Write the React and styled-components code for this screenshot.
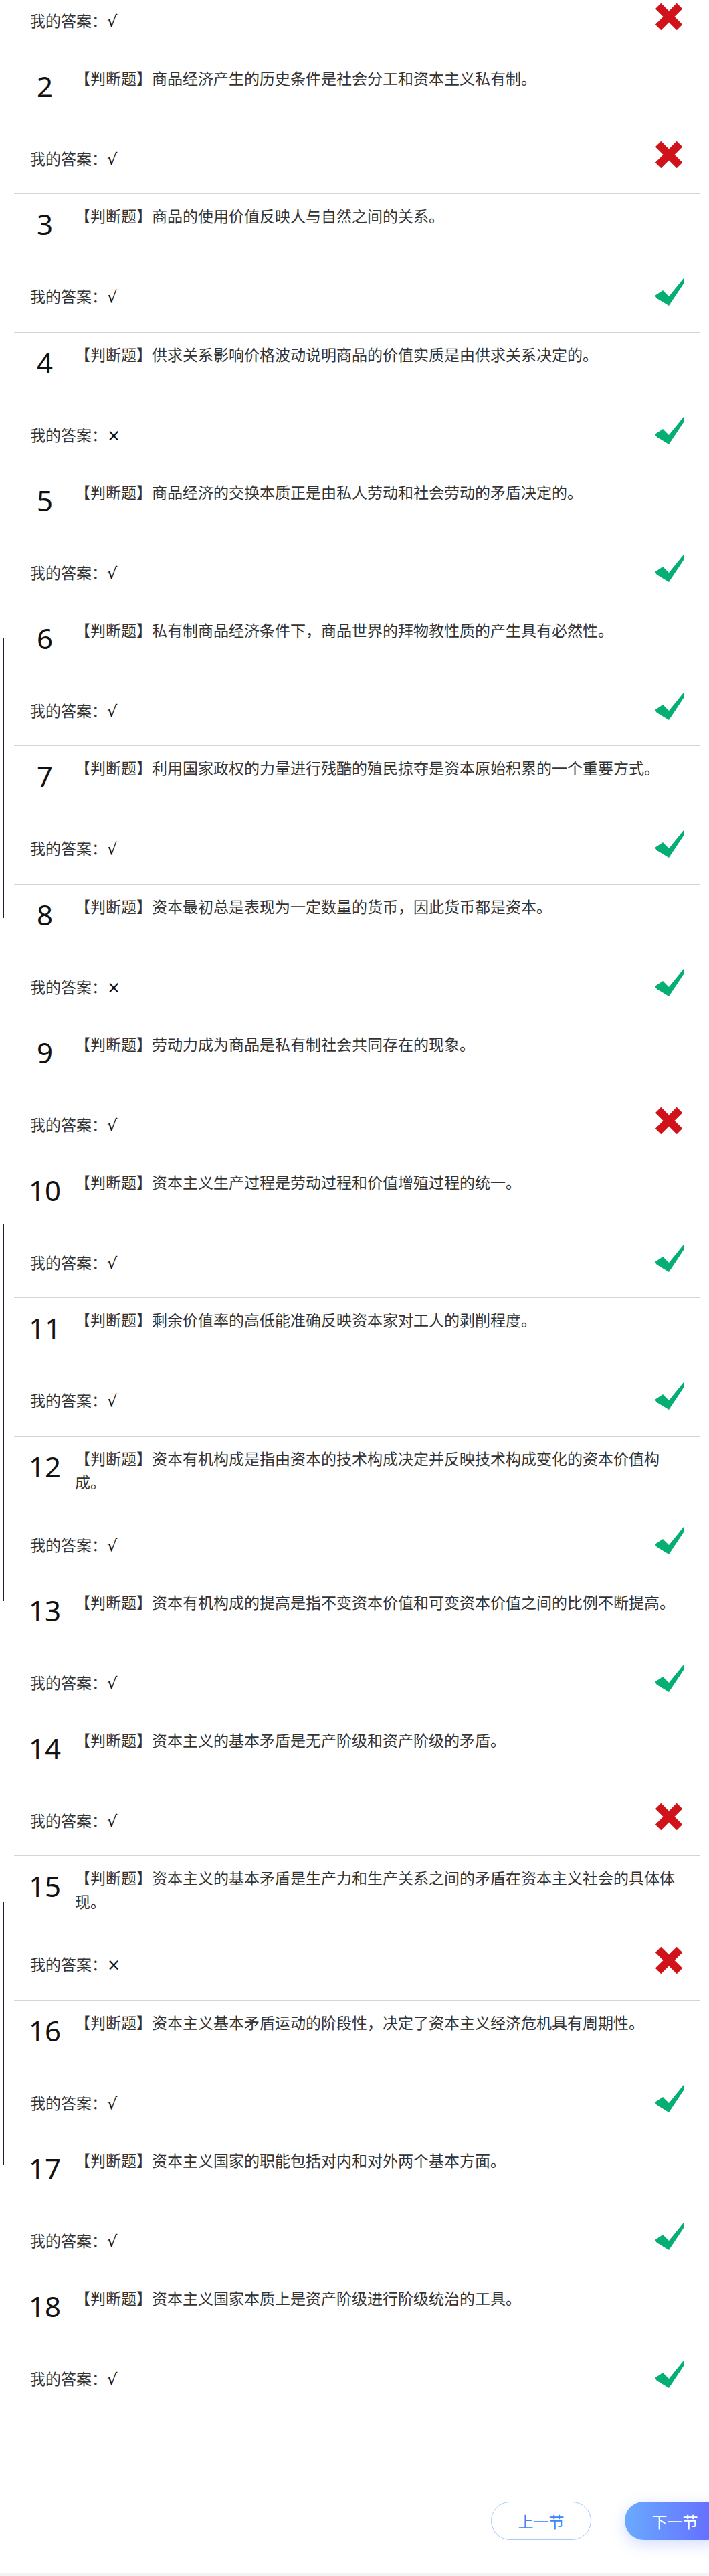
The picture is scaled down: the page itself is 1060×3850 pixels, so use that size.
import React from 'react';
import styled, { createGlobalStyle } from 'styled-components';

const GlobalStyle = createGlobalStyle`
  html, body {
    margin: 0;
    padding: 0;
    background: #f2f3f5;
    overflow-x: hidden;
  }
  * {
    box-sizing: border-box;
  }
`;

const Page = styled.div`
  position: relative;
  width: 1060px;
  height: 3845px;
  overflow: hidden;
  background: #fff;
  padding: 0 13px 0 21px;
  font-family: 'Noto Sans CJK SC', 'Noto Sans', sans-serif;
  color: #333;
`;

// 왼쪽 세로 막대 (스크린샷에 남은 자국)
const SideBar = styled.div`
  position: absolute;
  left: 4px;
  width: 2px;
  background: #1b2033;
`;

const List = styled.div`
  margin-top: -122.25px;
`;

const Item = styled.div`
  padding: 14px 25px 35.25px 24px;
  border-bottom: ${(p) => (p.$last ? 'none' : '1px solid #d4d4d4')};
`;

const QuestionRow = styled.div`
  display: flex;
  align-items: flex-start;
`;

const Num = styled.div`
  flex-shrink: 0;
  width: 50px;
  margin-left: -3px;
  margin-right: 20px;
  text-align: center;
  font-family: 'Noto Sans', sans-serif;
  font-size: 42px;
  line-height: 62px;
  color: #111;
`;

const QText = styled.div`
  flex: 1;
  margin-top: 1px;
  font-size: 23px;
  line-height: 35px;
  color: #333;
`;

const AnswerRow = styled.div`
  display: flex;
  align-items: center;
  justify-content: space-between;
  margin-top: 58px;
`;

const AnswerText = styled.div`
  height: 36px;
  font-size: 23px;
  line-height: 36px;
  color: #333;
`;

const Mark = styled.span`
  font-family: 'DejaVu Sans', 'Liberation Sans', sans-serif;
  font-size: 24px;
  line-height: 0;
  color: #111;
`;

const IconBox = styled.svg`
  width: 44px;
  height: 44px;
  flex-shrink: 0;
  margin-top: -14px;
  margin-bottom: -4px;
`;

const Footer = styled.div`
  display: flex;
  justify-content: flex-end;
  gap: 50px;
  margin-top: 132px;
  margin-right: -37px;
`;

const Button = styled.div`
  width: 150px;
  height: 57px;
  border-radius: 29px;
  display: flex;
  align-items: center;
  justify-content: center;
  font-size: 23px;
  border: 1px solid ${(p) => (p.$primary ? 'transparent' : '#a9c7ff')};
  color: ${(p) => (p.$primary ? '#fff' : '#3b86ff')};
  background: ${(p) =>
    p.$primary ? 'linear-gradient(90deg, #6aaaff 0%, #6366ff 100%)' : '#fff'};
  box-shadow: ${(p) =>
    p.$primary ? '0 6px 22px rgba(90, 130, 255, 0.28)' : 'none'};
`;

const WrongIcon = () => (
  <IconBox viewBox="0 0 44 44">
    <g stroke="#d0121b" strokeWidth="12" strokeLinecap="butt">
      <line x1="6" y1="6" x2="38" y2="38" />
      <line x1="38" y1="6" x2="6" y2="38" />
    </g>
  </IconBox>
);

const RightIcon = () => (
  <IconBox viewBox="0 0 44 44">
    <path d="M1 27 L13 19 L22 28 L44 1 L44 9 L22 42 L4 31 Z" fill="#05ae73" />
  </IconBox>
);

const questions = [
  { text: '商品是用来交换的劳动产品。', ans: '√', ok: false },
  { text: '商品经济产生的历史条件是社会分工和资本主义私有制。', ans: '√', ok: false },
  { text: '商品的使用价值反映人与自然之间的关系。', ans: '√', ok: true },
  { text: '供求关系影响价格波动说明商品的价值实质是由供求关系决定的。', ans: '×', ok: true },
  { text: '商品经济的交换本质正是由私人劳动和社会劳动的矛盾决定的。', ans: '√', ok: true },
  { text: '私有制商品经济条件下，商品世界的拜物教性质的产生具有必然性。', ans: '√', ok: true },
  { text: '利用国家政权的力量进行残酷的殖民掠夺是资本原始积累的一个重要方式。', ans: '√', ok: true },
  { text: '资本最初总是表现为一定数量的货币，因此货币都是资本。', ans: '×', ok: true },
  { text: '劳动力成为商品是私有制社会共同存在的现象。', ans: '√', ok: false },
  { text: '资本主义生产过程是劳动过程和价值增殖过程的统一。', ans: '√', ok: true },
  { text: '剩余价值率的高低能准确反映资本家对工人的剥削程度。', ans: '√', ok: true },
  { text: '资本有机构成是指由资本的技术构成决定并反映技术构成变化的资本价值构成。', ans: '√', ok: true },
  { text: '资本有机构成的提高是指不变资本价值和可变资本价值之间的比例不断提高。', ans: '√', ok: true },
  { text: '资本主义的基本矛盾是无产阶级和资产阶级的矛盾。', ans: '√', ok: false },
  { text: '资本主义的基本矛盾是生产力和生产关系之间的矛盾在资本主义社会的具体体现。', ans: '×', ok: false },
  { text: '资本主义基本矛盾运动的阶段性，决定了资本主义经济危机具有周期性。', ans: '√', ok: true },
  { text: '资本主义国家的职能包括对内和对外两个基本方面。', ans: '√', ok: true },
  { text: '资本主义国家本质上是资产阶级进行阶级统治的工具。', ans: '√', ok: true },
];

export default () => {
  return (
    <>
      <GlobalStyle />
      <Page>
        <SideBar style={{ top: 953, height: 419 }} />
        <SideBar style={{ top: 1830, height: 563 }} />
        <SideBar style={{ top: 2842, height: 393 }} />
        <List>
          {questions.map((q, i) => (
            <Item key={i} $last={i === questions.length - 1}>
              <QuestionRow>
                <Num>{i + 1}</Num>
                <QText>【判断题】{q.text}</QText>
              </QuestionRow>
              <AnswerRow>
                <AnswerText>
                  我的答案：<Mark>{q.ans}</Mark>
                </AnswerText>
                {q.ok ? <RightIcon /> : <WrongIcon />}
              </AnswerRow>
            </Item>
          ))}
        </List>
        <Footer>
          <Button>上一节</Button>
          <Button $primary>下一节</Button>
        </Footer>
      </Page>
    </>
  );
};
